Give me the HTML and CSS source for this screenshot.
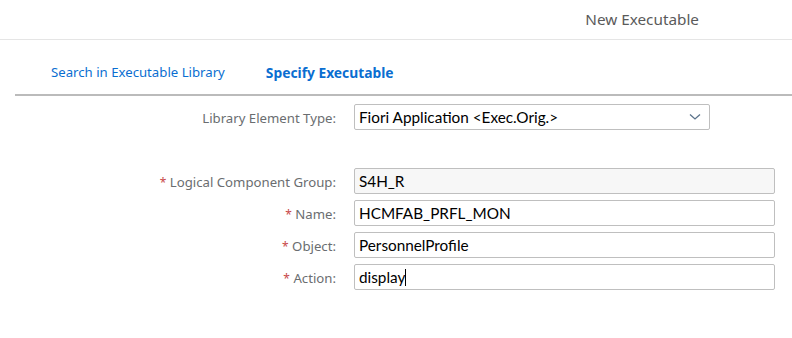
FILE: index.html
```html
<!DOCTYPE html>
<html lang="en">
<head>
  <meta charset="UTF-8">
  <title>New Executable</title>
  <link rel="stylesheet" href="styles.css">
</head>
<body>
  <div class="dialog">
    <header class="dialog-header">
      <h1>New Executable</h1>
    </header>

    <nav class="tabs">
      <a class="tab" href="#">Search in Executable Library</a>
      <a class="tab active" href="#">Specify Executable</a>
    </nav>

    <form class="form">
      <label class="label" for="type">Library Element Type:</label>
      <div class="select" id="type">
        <span>Fiori Application &lt;Exec.Orig.&gt;</span>
        <svg class="chevron" width="12" height="8" viewBox="0 0 12 8">
          <path d="M1 1.5 L6 6 L11 1.5" fill="none" stroke="#5b738b" stroke-width="1.3"/>
        </svg>
      </div>

      <label class="label spaced" for="lcg"><span class="req">*</span> Logical Component Group:</label>
      <input class="field spaced readonly" id="lcg" value="S4H_R" readonly>

      <label class="label" for="name"><span class="req">*</span> Name:</label>
      <input class="field" id="name" value="HCMFAB_PRFL_MON">

      <label class="label" for="object"><span class="req">*</span> Object:</label>
      <input class="field" id="object" value="PersonnelProfile">

      <label class="label" for="action"><span class="req">*</span> Action:</label>
      <div class="field" id="action">display<span class="caret"></span></div>
    </form>
  </div>
</body>
</html>
```

FILE: styles.css
```css
* {
  margin: 0;
  padding: 0;
  box-sizing: border-box;
}

body {
  background: #fff;
  font-family: 'Noto Sans', 'Open Sans', sans-serif;
  color: #32363a;
}

.dialog-header {
  height: 40px;
  border-bottom: 1px solid #e5e5e5;
  display: flex;
  align-items: center;
  justify-content: flex-end;
  padding-right: 93px;
  padding-bottom: 2px;
}

.dialog-header h1 {
  font-size: 15.3px;
  font-weight: 400;
  color: #5a5a5a;
}

.tabs {
  margin-left: 15px;
  height: 56px;
  border-bottom: 2px solid #bbbbbb;
  display: flex;
  align-items: flex-start;
  gap: 41px;
  padding: 23px 0 0 36px;
}

.tab {
  font-size: 13.2px;
  color: #0a6ed1;
  text-decoration: none;
}

.tab.active {
  font-weight: 700;
  font-size: 13.8px;
  color: #0a6ed1;
}

.form {
  display: grid;
  grid-template-columns: 336px 421px;
  column-gap: 18px;
  row-gap: 6px;
  padding-top: 8px;
  align-items: center;
}

.label {
  text-align: right;
  font-size: 13.2px;
  color: #6a6d70;
  padding-top: 1px;
}

.req {
  color: #c84848;
  font-size: 12px;
}

.spaced {
  margin-top: 32px;
}

.select {
  width: 356px;
  height: 26px;
  border: 1px solid #bfbfbf;
  border-radius: 2px;
  display: flex;
  align-items: center;
  justify-content: space-between;
  padding: 0 8px 0 4px;
  font-family: 'Lato', sans-serif;
  font-size: 15.3px;
  color: #000;
}

.field {
  height: 26px;
  border: 1px solid #bfbfbf;
  border-radius: 2px;
  padding: 0 4px;
  font-family: 'Lato', sans-serif;
  font-size: 15.3px;
  color: #000;
  background: #fff;
  outline: none;
  display: flex;
  align-items: center;
}

.field.readonly {
  background: #f7f7f7;
}

.caret {
  display: inline-block;
  width: 1px;
  height: 17px;
  background: #000;
}
```
